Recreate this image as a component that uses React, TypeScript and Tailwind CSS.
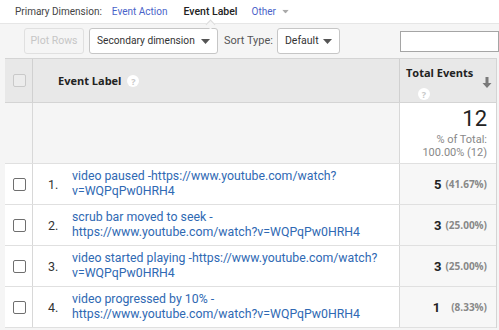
import React from 'react';

const rows = [
    { n: 1, label: 'video paused -https://www.youtube.com/watch?v=WQPqPw0HRH4', value: 5, pct: '(41.67%)' },
    { n: 2, label: 'scrub bar moved to seek -https://www.youtube.com/watch?v=WQPqPw0HRH4', value: 3, pct: '(25.00%)' },
    { n: 3, label: 'video started playing -https://www.youtube.com/watch?v=WQPqPw0HRH4', value: 3, pct: '(25.00%)' },
    { n: 4, label: 'video progressed by 10% -https://www.youtube.com/watch?v=WQPqPw0HRH4', value: 1, pct: '(8.33%)' },
];

const Caret: React.FC<{ className?: string }> = ({ className }) => (
    <svg width="9" height="5" viewBox="0 0 9 5" className={className}>
        <path d="M0 0 H9 L4.5 5 Z" fill="currentColor" />
    </svg>
);

const Help: React.FC = () => (
    <span className="inline-flex h-[12px] w-[12px] items-center justify-center rounded-full bg-white text-[9px] font-bold leading-none text-[#c8c8c8]">
        ?
    </span>
);

const Checkbox: React.FC<{ header?: boolean }> = ({ header }) => (
    <span
        className={
            header
                ? 'block h-[13px] w-[13px] rounded-[2px] border border-[#c9c9c9] bg-[#ececec]'
                : 'block h-[13px] w-[13px] rounded-[2px] border border-[#6f6f6f] bg-white'
        }
    />
);

export default function App() {
    return (
        <div className="flex h-[330px] w-[499px] flex-col overflow-hidden bg-[#f5f5f5] font-['Roboto',sans-serif] text-[#333]">
            {/* dimension picker */}
            <div className="relative flex h-[24px] shrink-0 items-center bg-white pl-[15px] text-[10px] border-b border-[#e6e6e6] whitespace-nowrap">
                <span className="text-[#444]">Primary Dimension:</span>
                <span className="ml-[10px] text-[#4a63c9]">Event Action</span>
                <span className="relative ml-[16px] text-[10.5px] font-medium text-[#222]">
                    Event Label
                    <span className="absolute left-[24px] top-[17px] h-[7px] w-[7px] rotate-45 border-l border-t border-[#dcdcdc] bg-[#f5f5f5]" />
                </span>
                <span className="ml-[14px] text-[#4a63c9]">Other</span>
                <Caret className="ml-[5px] scale-75 text-[#aaa]" />
            </div>

            {/* toolbar */}
            <div className="flex h-[34px] shrink-0 items-center pl-[24px] text-[11px] whitespace-nowrap">
                <button className="h-[26px] w-[60px] shrink-0 rounded-[3px] border border-[#e0e0e0] text-[10.5px] text-[#c6c6c6]">
                    Plot Rows
                </button>
                <button className="ml-[5px] flex h-[26px] w-[129px] shrink-0 items-center justify-between rounded-[3px] border border-[#c6c6c6] bg-white pl-[7px] pr-[7px] text-[10.2px] text-[#333]">
                    <span>Secondary dimension</span>
                    <Caret className="text-[#555]" />
                </button>
                <span className="ml-[6px] text-[#555]">Sort Type:</span>
                <button className="ml-[4px] flex h-[26px] w-[63px] shrink-0 items-center justify-between rounded-[3px] border border-[#c6c6c6] bg-white pl-[7px] pr-[7px] text-[10.5px] text-[#333]">
                    <span>Default</span>
                    <Caret className="text-[#555]" />
                </button>
                <div className="ml-[60px] h-[21px] flex-1 border border-[#a5a5a5] bg-white" />
            </div>

            {/* table */}
            <div className="ml-[5px] w-[492px] border-t border-r border-[#d4d4d4] bg-white">
                {/* header */}
                <div className="flex h-[44px] border-b border-[#d4d4d4] bg-[#e8e8e8]">
                    <div className="flex w-[28px] items-center justify-center border-r border-[#d0d0d0] pl-[2px]">
                        <Checkbox header />
                    </div>
                    <div className="flex flex-1 items-center gap-[6px] pl-[25px] pt-[1px] font-['Open_Sans',sans-serif] text-[11px] font-bold text-[#222]">
                        <span>Event Label</span>
                        <Help />
                    </div>
                    <div className="relative w-[97px] border-l border-[#d0d0d0] pl-[6px] pt-[6px] font-['Open_Sans',sans-serif] text-[11px] font-bold text-[#222]">
                        <div>Total Events</div>
                        <div className="mt-[4px] pl-[12px]">
                            <Help />
                        </div>
                        <svg width="10" height="11" viewBox="0 0 10 11" className="absolute right-[4px] top-[18px]">
                            <path d="M3.5 0 H6.5 V6 H9.5 L5 11 L0.5 6 H3.5 Z" fill="#7a7a7a" />
                        </svg>
                    </div>
                </div>

                {/* totals */}
                <div className="flex h-[61px] border-b border-[#e0e0e0] bg-[#f5f5f5]">
                    <div className="w-[28px] border-r border-[#d8d8d8]" />
                    <div className="flex-1" />
                    <div className="w-[97px] border-l border-[#d8d8d8] bg-white pr-[9px] pt-[3px] text-right">
                        <div className="text-[22px] leading-[26px] text-[#222]">12</div>
                        <div className="mt-[1px] text-[11px] leading-[13px] text-[#888]">% of Total:</div>
                        <div className="text-[11px] leading-[13px] text-[#888]">100.00% (12)</div>
                    </div>
                </div>

                {/* rows */}
                {rows.map((r) => (
                    <div key={r.n} className="flex h-[41px] border-b border-[#e0e0e0]">
                        <div className="flex w-[28px] items-center justify-center border-r border-[#d8d8d8] pl-[2px]">
                            <Checkbox />
                        </div>
                        <div className="flex flex-1 items-center">
                            <span className="w-[39px] pl-[15px] pt-[2px] text-[12.5px] text-[#333]">{r.n}.</span>
                            <a className="w-[318px] text-[12.3px] leading-[15px] text-[#2f69b3]">{r.label}</a>
                        </div>
                        <div className="flex w-[97px] items-center justify-end gap-[4px] border-l border-[#d8d8d8] bg-[#f7f7f7] pr-[9px] pt-[1px]">
                            <span className="text-[13px] font-bold text-[#222]">{r.value}</span>
                            <span className={r.n === 4 ? "ml-[7px] font-['Open_Sans',sans-serif] text-[10px] font-bold text-[#888]" : "font-['Open_Sans',sans-serif] text-[10px] font-bold text-[#888]"}>
                                {r.pct}
                            </span>
                        </div>
                    </div>
                ))}
            </div>
        </div>
    );
}
